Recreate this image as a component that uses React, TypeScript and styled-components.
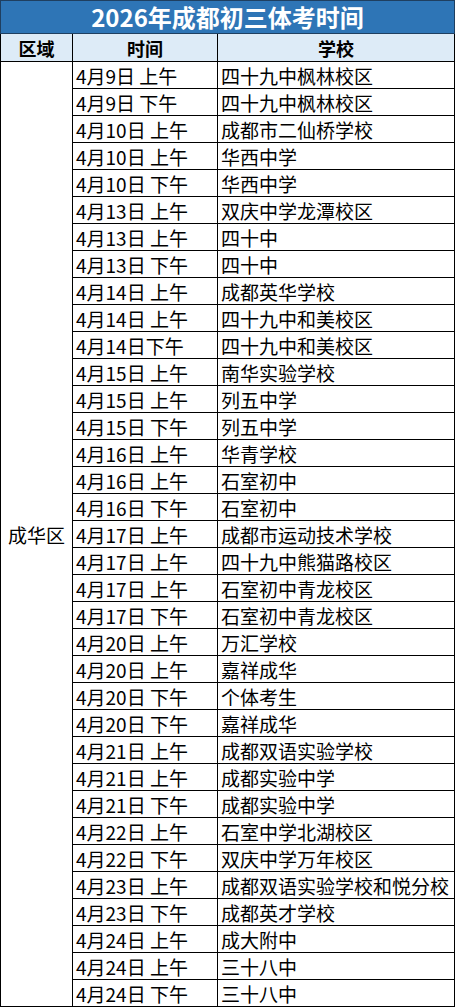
import styled, { createGlobalStyle } from 'styled-components'

const GlobalStyle = createGlobalStyle`
	html, body {
		margin: 0;
		padding: 0;
		background: #ffffff;
	}
	body {
		font-family: "Noto Sans CJK SC", "Noto Sans", sans-serif;
	}
`

const Table = styled.table`
	width: 455px;
	border-collapse: collapse;
	table-layout: fixed;
	color: #000000;
`

const Row = styled.tr<{ $h: number }>`
	height: ${(p) => p.$h}px;
`

const TitleCell = styled.th`
	background: #2e75b6;
	color: #ffffff;
	font-size: 24px;
	font-weight: 700;
	text-align: center;
	padding: 0;
	line-height: 1;
	border: 1px solid #1f3f60;
`

const HeadCell = styled.th`
	background: #ddebf7;
	font-size: 18px;
	font-weight: 700;
	text-align: center;
	padding: 0;
	line-height: 1;
	border: 1px solid #000000;
`

const Cell = styled.td`
	font-size: 19px;
	padding: 0 0 0 3px;
	line-height: 1;
	white-space: nowrap;
	border: 1px solid #000000;
	text-align: left;
`

const RegionCell = styled(Cell)`
	text-align: center;
	padding: 0;
`

const rows: [string, string][] = [
	['4月9日 上午', '四十九中枫林校区'],
	['4月9日 下午', '四十九中枫林校区'],
	['4月10日 上午', '成都市二仙桥学校'],
	['4月10日 上午', '华西中学'],
	['4月10日 下午', '华西中学'],
	['4月13日 上午', '双庆中学龙潭校区'],
	['4月13日 上午', '四十中'],
	['4月13日 下午', '四十中'],
	['4月14日 上午', '成都英华学校'],
	['4月14日 上午', '四十九中和美校区'],
	['4月14日下午', '四十九中和美校区'],
	['4月15日 上午', '南华实验学校'],
	['4月15日 上午', '列五中学'],
	['4月15日 下午', '列五中学'],
	['4月16日 上午', '华青学校'],
	['4月16日 上午', '石室初中'],
	['4月16日 下午', '石室初中'],
	['4月17日 上午', '成都市运动技术学校'],
	['4月17日 上午', '四十九中熊猫路校区'],
	['4月17日 上午', '石室初中青龙校区'],
	['4月17日 下午', '石室初中青龙校区'],
	['4月20日 上午', '万汇学校'],
	['4月20日 上午', '嘉祥成华'],
	['4月20日 下午', '个体考生'],
	['4月20日 下午', '嘉祥成华'],
	['4月21日 上午', '成都双语实验学校'],
	['4月21日 上午', '成都实验中学'],
	['4月21日 下午', '成都实验中学'],
	['4月22日 上午', '石室中学北湖校区'],
	['4月22日 下午', '双庆中学万年校区'],
	['4月23日 上午', '成都双语实验学校和悦分校'],
	['4月23日 下午', '成都英才学校'],
	['4月24日 上午', '成大附中'],
	['4月24日 上午', '三十八中'],
	['4月24日 下午', '三十八中'],
]

const App = () => {
	return (
		<>
			<GlobalStyle />
			<Table>
				<colgroup>
					<col style={{ width: 72 }} />
					<col style={{ width: 145 }} />
					<col />
				</colgroup>
				<thead>
					<Row $h={33}>
						<TitleCell colSpan={3}>2026年成都初三体考时间</TitleCell>
					</Row>
					<Row $h={28}>
						<HeadCell>区域</HeadCell>
						<HeadCell>时间</HeadCell>
						<HeadCell>学校</HeadCell>
					</Row>
				</thead>
				<tbody>
					{rows.map(([time, school], i) => (
						<Row $h={27} key={i}>
							{i === 0 && <RegionCell rowSpan={rows.length}>成华区</RegionCell>}
							<Cell>{time}</Cell>
							<Cell>{school}</Cell>
						</Row>
					))}
				</tbody>
			</Table>
		</>
	)
}

export default App
